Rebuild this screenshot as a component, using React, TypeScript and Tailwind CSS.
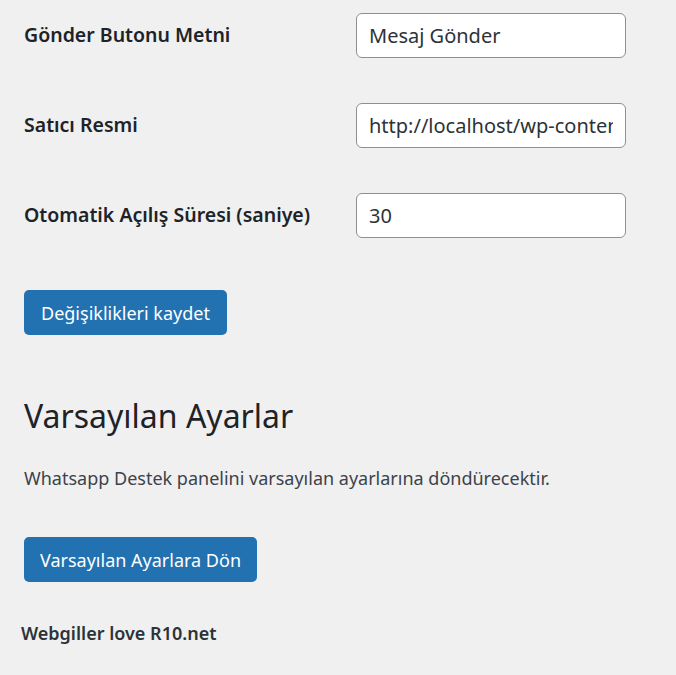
const fields = [
  { label: "Gönder Butonu Metni", value: "Mesaj Gönder" },
  { label: "Satıcı Resmi", value: "http://localhost/wp-content/uploads/satici.png" },
  { label: "Otomatik Açılış Süresi (saniye)", value: "30" },
];

export default function App() {
  return (
    <div className="min-h-[675px] bg-[#f0f0f1] text-[#1d2327] font-['Noto_Sans',sans-serif]">
      <div className="pl-6 pt-[13px]">
        {/* settings table */}
        <div className="flex flex-col gap-[45px]">
          {fields.map((f) => (
            <div key={f.label} className="flex items-center">
              <label className="w-[332px] -mt-[2px] text-[19.5px] font-semibold text-[#1d2327] leading-[30px]">
                {f.label}
              </label>
              <input
                type="text"
                defaultValue={f.value}
                className="w-[270px] h-[45px] px-3 rounded-[6px] border border-[#8c8f94] bg-white text-[20px] text-[#2c3338] outline-none"
              />
            </div>
          ))}
        </div>

        <button className="mt-[52px] h-[45px] px-[17px] rounded-[5px] bg-[#2271b1] text-white text-[18px] leading-none">
          Değişiklikleri kaydet
        </button>

        <h2 className="mt-[59px] text-[32px] leading-[44px] font-normal text-[#1d2327]">
          Varsayılan Ayarlar
        </h2>
        <p className="mt-[25px] text-[18px] leading-[30px] text-[#3c434a]">
          Whatsapp Destek panelini varsayılan ayarlarına döndürecektir.
        </p>

        <button className="mt-[44px] h-[45px] px-4 rounded-[5px] bg-[#2271b1] text-white text-[18px] leading-none">
          Varsayılan Ayarlara Dön
        </button>
      </div>

      <div className="pl-[21px] mt-[36px] text-[18px] leading-[30px] font-semibold text-[#2c3338]">
        Webgiller love R10.net
      </div>
    </div>
  );
}
